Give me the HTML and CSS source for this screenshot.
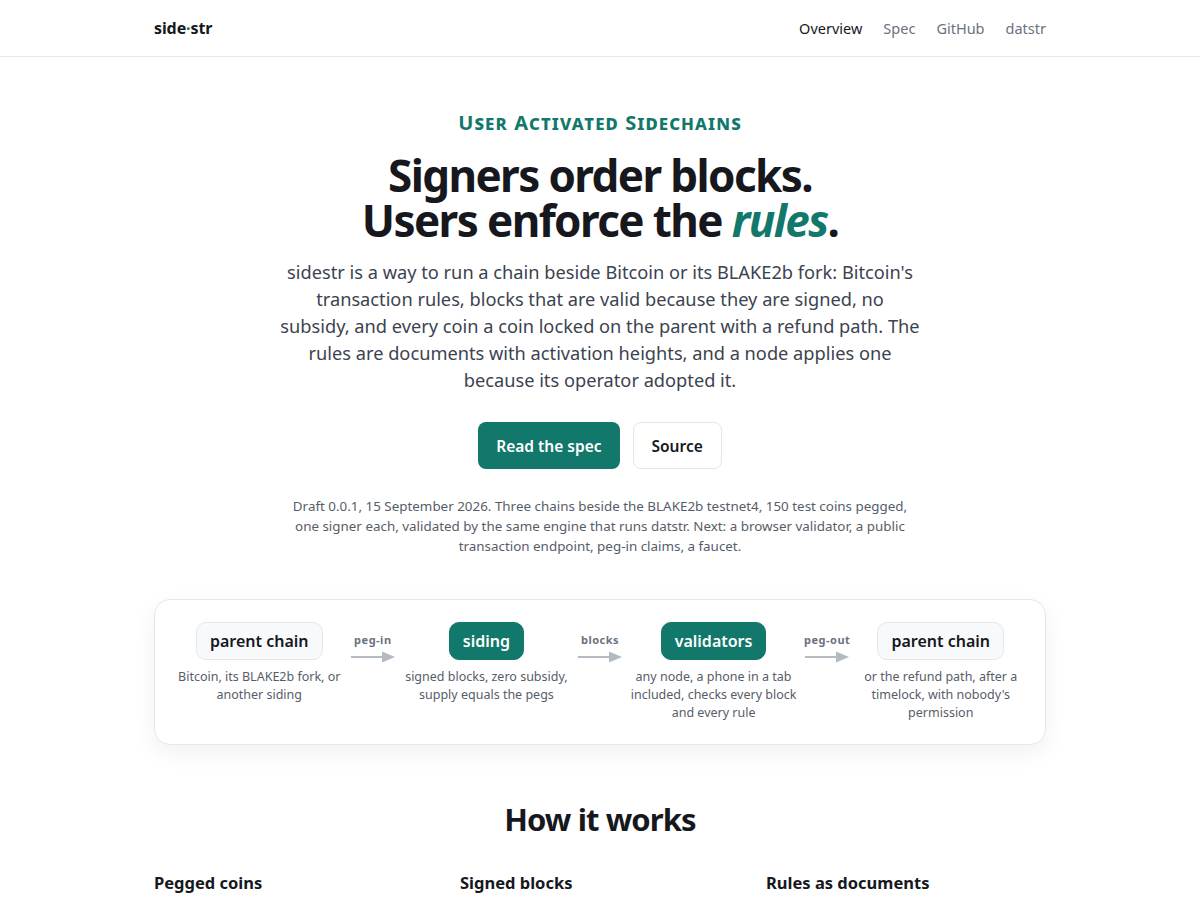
FILE: index.html
```html
<!DOCTYPE html>
<html lang="en">
<head>
<meta charset="utf-8">
<title>sidestr</title>
<link rel="stylesheet" href="styles.css">
</head>
<body>
<header class="topbar">
  <div class="wrap topbar-inner">
    <a class="logo" href="#">side<span class="dot">·</span>str</a>
    <nav class="nav">
      <a class="nav-link active" href="#">Overview</a>
      <a class="nav-link" href="#">Spec</a>
      <a class="nav-link" href="#">GitHub</a>
      <a class="nav-link" href="#">datstr</a>
    </nav>
  </div>
</header>

<main class="wrap">
  <section class="hero">
    <p class="eyebrow">User Activated Sidechains</p>
    <h1 class="title">Signers order blocks.<br>Users enforce the <em>rules</em>.</h1>
    <p class="lead">sidestr is a way to run a chain beside Bitcoin or its BLAKE2b fork: Bitcoin's transaction rules, blocks that are valid because they are signed, no subsidy, and every coin a coin locked on the parent with a refund path. The rules are documents with activation heights, and a node applies one because its operator adopted it.</p>
    <div class="actions">
      <a class="btn btn-primary" href="#">Read the spec</a>
      <a class="btn btn-ghost" href="#">Source</a>
    </div>
    <p class="status">Draft 0.0.1, 15 September 2026. Three chains beside the BLAKE2b testnet4, 150 test coins pegged, one signer each, validated by the same engine that runs datstr. Next: a browser validator, a public transaction endpoint, peg-in claims, a faucet.</p>
  </section>

  <section class="flow">
    <div class="step">
      <span class="node">parent chain</span>
      <p class="caption">Bitcoin, its BLAKE2b fork, or another siding</p>
    </div>
    <div class="link">
      <span class="link-label">peg-in</span>
      <svg class="arrow" width="44" height="12" viewBox="0 0 44 12"><path d="M0 6H32" stroke="#b4bac2" stroke-width="2"/><path d="M31 0.5L44 6L31 11.5Z" fill="#b4bac2"/></svg>
    </div>
    <div class="step">
      <span class="node node-accent">siding</span>
      <p class="caption">signed blocks, zero subsidy, supply equals the pegs</p>
    </div>
    <div class="link">
      <span class="link-label">blocks</span>
      <svg class="arrow" width="44" height="12" viewBox="0 0 44 12"><path d="M0 6H32" stroke="#b4bac2" stroke-width="2"/><path d="M31 0.5L44 6L31 11.5Z" fill="#b4bac2"/></svg>
    </div>
    <div class="step">
      <span class="node node-accent">validators</span>
      <p class="caption">any node, a phone in a tab included, checks every block and every rule</p>
    </div>
    <div class="link">
      <span class="link-label">peg-out</span>
      <svg class="arrow" width="44" height="12" viewBox="0 0 44 12"><path d="M0 6H32" stroke="#b4bac2" stroke-width="2"/><path d="M31 0.5L44 6L31 11.5Z" fill="#b4bac2"/></svg>
    </div>
    <div class="step">
      <span class="node">parent chain</span>
      <p class="caption">or the refund path, after a timelock, with nobody's permission</p>
    </div>
  </section>

  <section class="how">
    <h2 class="how-title">How it works</h2>
    <div class="cols">
      <div class="col">
        <h3 class="col-title">Pegged coins</h3>
        <p class="col-text">Every coin on a siding is a coin locked on the parent chain, with a refund path that opens after a timelock.</p>
      </div>
      <div class="col">
        <h3 class="col-title">Signed blocks</h3>
        <p class="col-text">A block is valid because its signers signed it. There is no mining and no subsidy.</p>
      </div>
      <div class="col">
        <h3 class="col-title">Rules as documents</h3>
        <p class="col-text">Rules are documents with activation heights. A node applies one because its operator adopted it.</p>
      </div>
    </div>
  </section>
</main>
</body>
</html>
```

FILE: styles.css
```css
* { box-sizing: border-box; }
html, body { margin: 0; padding: 0; }
body {
  font-family: "Noto Sans", "Open Sans", sans-serif;
  color: #16181d;
  background: #ffffff;
}
a { text-decoration: none; color: inherit; }

.wrap {
  width: 892px;
  margin: 0 auto;
}

.topbar {
  border-bottom: 1px solid #e5e7eb;
  height: 57px;
}
.topbar-inner {
  height: 56px;
  display: flex;
  align-items: center;
  justify-content: space-between;
}
.logo {
  font-size: 16px;
  font-weight: 700;
  color: #16181d;
  letter-spacing: -0.1px;
}
.logo .dot { color: #12786b; }
.nav {
  display: flex;
  gap: 21px;
}
.nav-link {
  font-size: 14.5px;
  color: #6b7280;
}
.nav-link.active { color: #16181d; }

.hero {
  display: flex;
  flex-direction: column;
  align-items: center;
  text-align: center;
  padding-top: 53px;
}
.eyebrow {
  margin: 0;
  font-variant: small-caps;
  font-size: 20px;
  line-height: 26px;
  font-weight: 700;
  letter-spacing: 1.1px;
  color: #12786b;
}
.title {
  margin: 17px 0 0;
  font-size: 44px;
  line-height: 45px;
  font-weight: 700;
  letter-spacing: -1.6px;
  color: #16181d;
}
.title em {
  font-style: italic;
  color: #12786b;
}
.lead {
  margin: 16px 0 0;
  width: 641px;
  font-size: 18.23px;
  line-height: 27px;
  color: #3c4350;
}
.actions {
  display: flex;
  gap: 13px;
  margin-top: 28px;
}
.btn {
  display: inline-flex;
  align-items: center;
  justify-content: center;
  height: 47px;
  padding: 0 18px;
  border-radius: 8px;
  font-size: 15.5px;
  font-weight: 600;
}
.btn-primary {
  background: #12786b;
  color: #ffffff;
}
.btn-ghost {
  background: #ffffff;
  color: #16181d;
  border: 1px solid #e2e5e9;
}
.status {
  margin: 27px 0 0;
  width: 622px;
  font-size: 13.4px;
  line-height: 20px;
  color: #565d69;
}

.flow {
  margin-top: 43px;
  display: grid;
  grid-template-columns: 1fr 58.7px 1fr 58.7px 1fr 58.7px 1fr;
  padding: 22px 20px 22px;
  border: 1px solid #e5e7eb;
  border-radius: 16px;
  background: #ffffff;
  box-shadow: 0 8px 24px rgba(17, 24, 39, 0.06);
}
.step {
  display: flex;
  flex-direction: column;
  align-items: center;
  text-align: center;
}
.node {
  display: inline-block;
  padding: 0 13px;
  height: 38px;
  line-height: 37px;
  border-radius: 10px;
  font-size: 16px;
  font-weight: 600;
  background: #f8f9fb;
  border: 1px solid #e5e7eb;
  color: #16181d;
}
.node-accent {
  background: #12786b;
  border-color: #12786b;
  color: #ffffff;
}
.caption {
  margin: 8px 0 0;
  font-size: 12.5px;
  line-height: 18px;
  color: #565d69;
}
.link {
  display: flex;
  flex-direction: column;
  align-items: center;
  padding-top: 11px;
}
.link-label {
  font-size: 11px;
  line-height: 14px;
  font-weight: 700;
  letter-spacing: 0.5px;
  color: #6b7280;
}
.arrow {
  display: block;
  margin-top: 4px;
}

.how {
  margin-top: 54px;
}
.how-title {
  margin: 0;
  text-align: center;
  font-size: 31px;
  line-height: 40px;
  font-weight: 700;
  letter-spacing: -0.9px;
  color: #16181d;
}
.cols {
  margin-top: 32px;
  display: grid;
  grid-template-columns: repeat(3, 1fr);
  gap: 26px;
}
.col-title {
  margin: 0;
  font-size: 16.5px;
  line-height: 24px;
  font-weight: 700;
  color: #16181d;
}
.col-text {
  margin: 8px 0 0;
  font-size: 15px;
  line-height: 24px;
  color: #3c4350;
}
```
